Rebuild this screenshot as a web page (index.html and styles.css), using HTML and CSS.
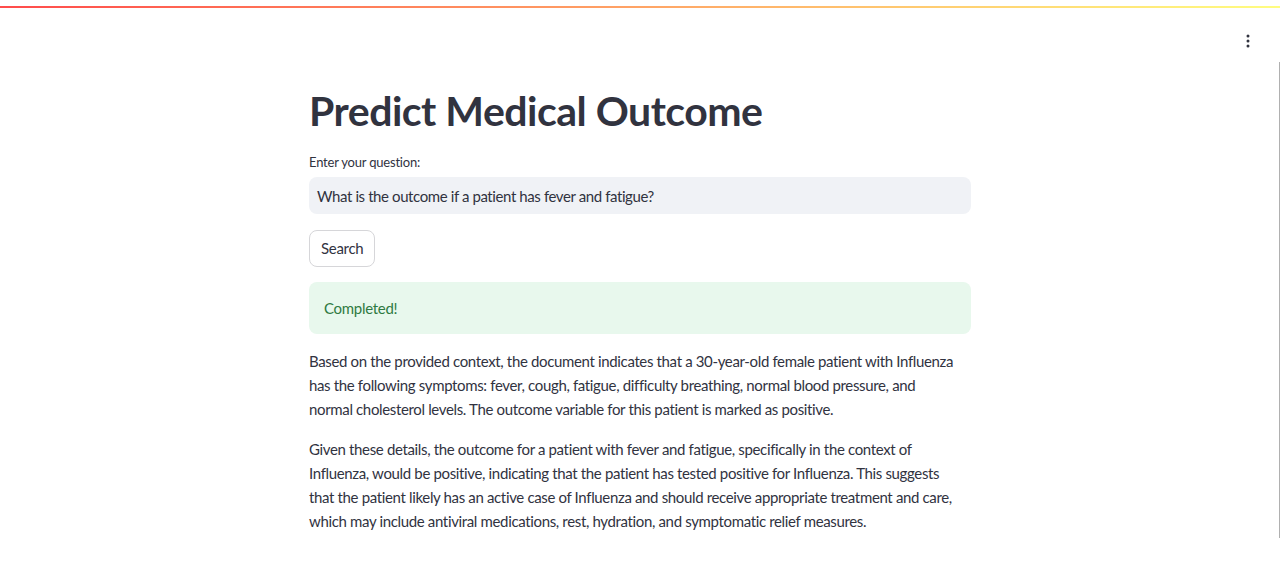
FILE: index.html
```html
<!DOCTYPE html>
<html lang="en">
<head>
<meta charset="utf-8">
<title>Predict Medical Outcome</title>
<link rel="stylesheet" href="styles.css">
</head>
<body>
<div class="app">
  <div class="decoration"></div>
  <header class="toolbar">
    <button class="menu" aria-label="Main menu">
      <svg width="4" height="14" viewBox="0 0 4 14"><circle cx="2" cy="2" r="1.5" fill="#31333f"/><circle cx="2" cy="7" r="1.5" fill="#31333f"/><circle cx="2" cy="12" r="1.5" fill="#31333f"/></svg>
    </button>
  </header>
  <div class="scrollbar"></div>
  <main class="main">
    <h1 class="title">Predict Medical Outcome</h1>
    <label class="label" for="q">Enter your question:</label>
    <div class="input">What is the outcome if a patient has fever and fatigue?</div>
    <button class="btn">Search</button>
    <div class="alert">Completed!</div>
    <p class="para">Based on the provided context, the document indicates that a 30-year-old female patient with Influenza has the following symptoms: fever, cough, fatigue, difficulty breathing, normal blood pressure, and normal cholesterol levels. The outcome variable for this patient is marked as positive.</p>
    <p class="para">Given these details, the outcome for a patient with fever and fatigue, specifically in the context of Influenza, would be positive, indicating that the patient has tested positive for Influenza. This suggests that the patient likely has an active case of Influenza and should receive appropriate treatment and care, which may include antiviral medications, rest, hydration, and symptomatic relief measures.</p>
  </main>
</div>
</body>
</html>
```

FILE: styles.css
```css
* { box-sizing: border-box; }
html, body { margin: 0; padding: 0; background: #fff; }
body {
  font-family: "Lato", "Noto Sans", sans-serif;
  color: #31333f;
  height: 581px;
  overflow: hidden;
}
.app { position: relative; height: 581px; }
.decoration {
  position: absolute;
  left: 0; right: 0; top: 6px;
  height: 2px;
  background: linear-gradient(90deg, #ff4b4b, #fffd80);
}
.toolbar {
  height: 60px;
  display: flex;
  justify-content: flex-end;
  align-items: flex-start;
  padding: 30px 24px 0 0;
}
.menu {
  border: 0; background: transparent; padding: 4px 6px;
  display: flex; align-items: center; justify-content: center;
}
.scrollbar {
  position: absolute;
  right: 0; top: 62px;
  width: 1px; height: 476px;
  background: #b0b0b0;
}
.main {
  width: 662px;
  margin: 0 auto;
}
.title {
  font-size: 41px;
  font-weight: 700;
  margin: 26px 0 0 0;
  line-height: 1.2;
  letter-spacing: -0.5px;
}
.label {
  display: block;
  font-size: 13px;
  margin-top: 18px;
  line-height: 18px;
  letter-spacing: -0.2px;
}
.input {
  margin-top: 6px;
  height: 37px;
  background: #f0f2f6;
  border-radius: 8px;
  padding: 0 8px;
  display: flex; align-items: center;
  font-size: 15px;
  letter-spacing: -0.4px;
}
.btn {
  display: block;
  margin-top: 16px;
  height: 37px;
  padding: 0 11px 1px;
  border: 1px solid #d6d6d9;
  border-radius: 8px;
  background: #fff;
  font-family: inherit;
  font-size: 15px;
  letter-spacing: -0.3px;
  color: #31333f;
}
.alert {
  margin-top: 15px;
  height: 52px;
  background: #e8f8ed;
  border-radius: 8px;
  padding: 0 15px;
  display: flex; align-items: center;
  color: #2f7a42;
  font-size: 15px;
  letter-spacing: -0.3px;
}
.para {
  font-size: 15px;
  line-height: 24px;
  margin: 15px 0 0 0;
  letter-spacing: -0.35px;
  max-width: 648px;
}
.para + .para { margin-top: 16px; }
```
